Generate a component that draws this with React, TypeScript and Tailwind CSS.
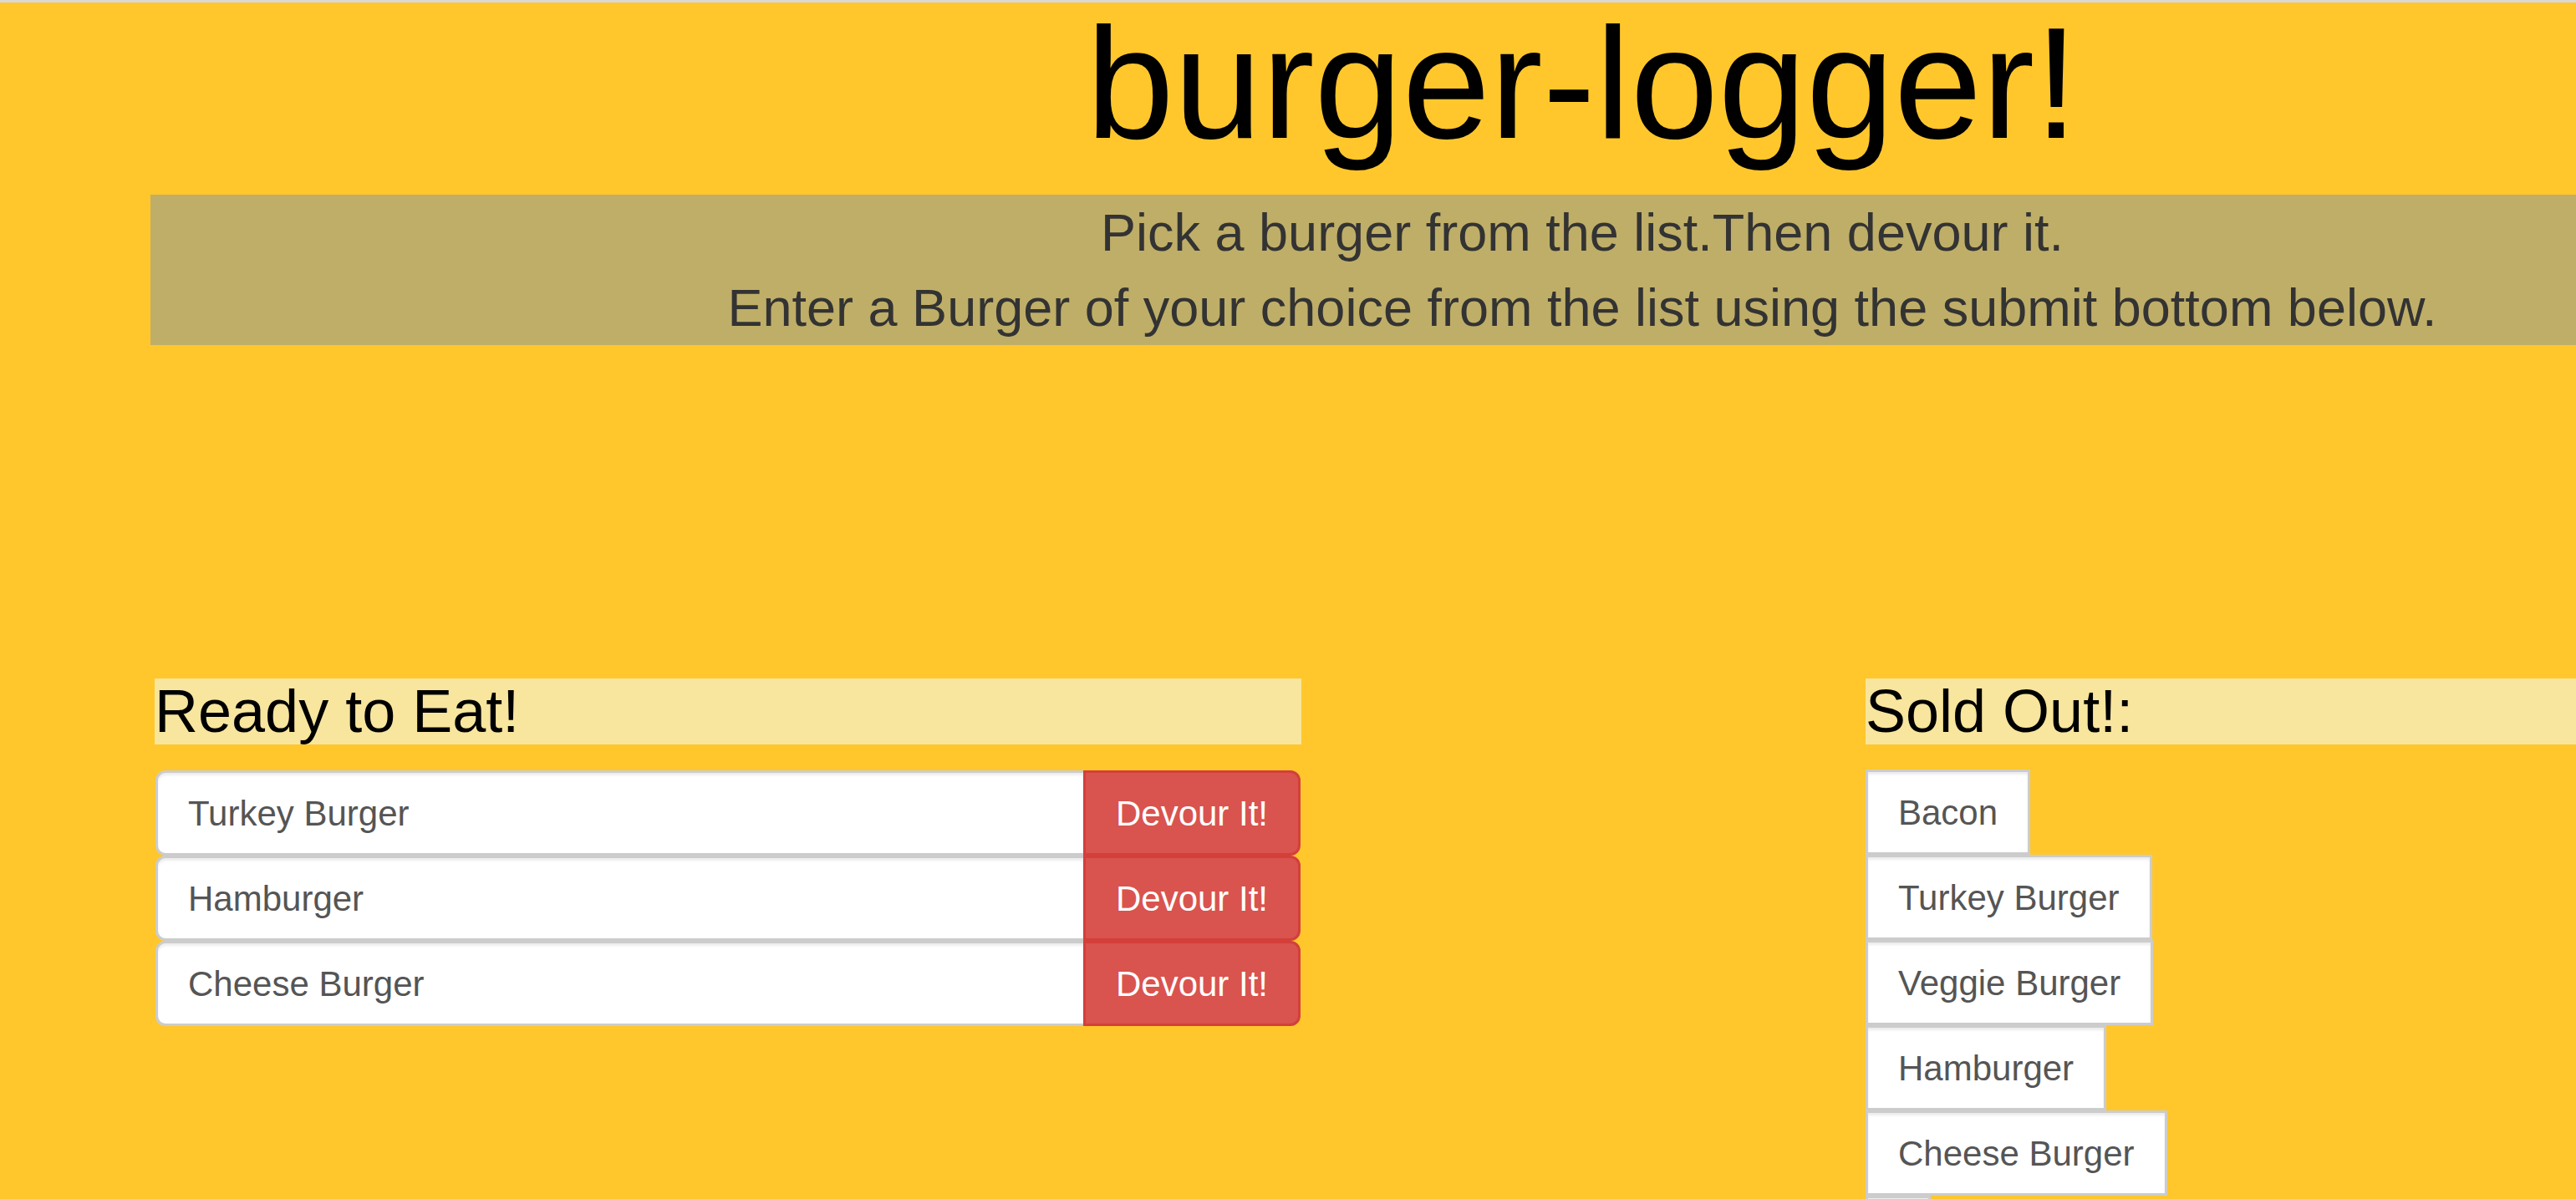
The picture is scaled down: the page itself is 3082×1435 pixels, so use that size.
const readyToEat = ["Turkey Burger", "Hamburger", "Cheese Burger"];
const soldOut = ["Bacon", "Turkey Burger", "Veggie Burger", "Hamburger", "Cheese Burger", ""];

const App = () => {
    return (
        <div
            className="h-screen w-full overflow-hidden bg-[#FFC72C] border-t-[3px] border-[#d9d9d9]"
            style={{ fontFamily: '"Liberation Sans", Arial, sans-serif' }}
        >
            <div className="ml-[180px] w-[3426px]">
                <h1 className="text-center text-[189px] leading-[193px] text-black">
                    burger-logger!
                </h1>

                <div className="mt-[37px] bg-[#BFAE68] text-center text-[63px] leading-[90px] text-[#333]">
                    <p>Pick a burger from the list.Then devour it.</p>
                    <p>Enter a Burger of your choice from the list using the submit bottom below.</p>
                </div>

                <div className="mt-[399px] flex">
                    {/* left column */}
                    <div className="ml-[5px] w-[1372px] shrink-0">
                        <h3 className="bg-[#F8E59E] text-[72px] leading-[79px] text-black">
                            Ready to Eat!
                        </h3>
                        <div className="mt-[31px] mx-px flex flex-col">
                            {readyToEat.map((burger) => (
                                <div key={burger} className="flex h-[102px]">
                                    <div className="flex flex-1 items-center rounded-l-[12px] border-[3px] border-r-0 border-[#ccc] bg-white px-[36px] text-[42px] text-[#555] shadow-[inset_0_3px_3px_rgba(0,0,0,0.075)]">
                                        {burger}
                                    </div>
                                    <button
                                        type="button"
                                        className="flex w-[260px] items-center justify-center rounded-r-[12px] border-[3px] border-[#d43f3a] bg-[#d9534f] text-[42px] text-white"
                                    >
                                        Devour It!
                                    </button>
                                </div>
                            ))}
                        </div>
                    </div>

                    {/* right column */}
                    <div className="ml-[675px] flex-1">
                        <h3 className="bg-[#F8E59E] text-[72px] leading-[79px] text-black">
                            Sold Out!:
                        </h3>
                        <div className="mt-[30px] flex flex-col items-start">
                            {soldOut.map((burger, i) => (
                                <div
                                    key={i}
                                    className="flex h-[102px] min-w-[78px] items-center border-[3px] border-[#ccc] bg-white px-[36px] text-[42px] text-[#555] shadow-[inset_0_3px_3px_rgba(0,0,0,0.075)]"
                                >
                                    {burger}
                                </div>
                            ))}
                        </div>
                    </div>
                </div>
            </div>
        </div>
    );
};

export default App;
